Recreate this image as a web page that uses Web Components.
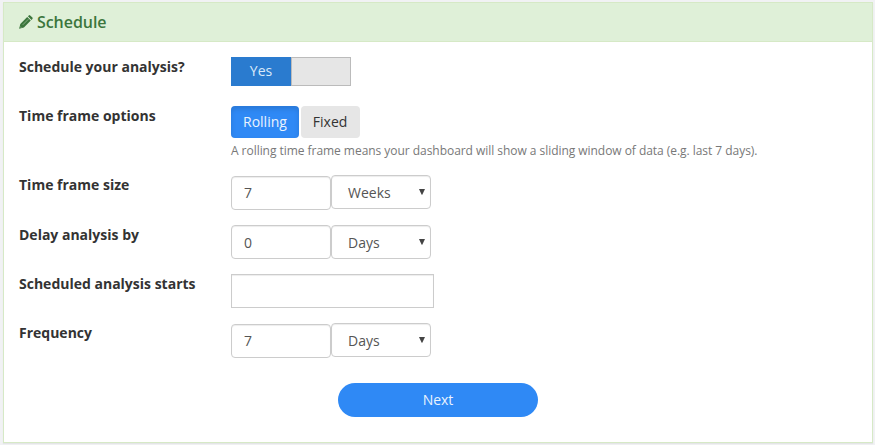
<!DOCTYPE html>
<html lang="en">
<head>
<meta charset="utf-8">
<title>Schedule</title>
<style>
body { margin: 0; background: #f1f2f4; font: 14px/20px "Open Sans", "Noto Sans", sans-serif; color: #333; }
</style>
</head>
<body>
<schedule-panel>
  <span slot="title">Schedule</span>
  <form-row label="Schedule your analysis?" style="--h:49px"><toggle-switch>Yes</toggle-switch></form-row>
  <form-row label="Time frame options" style="--h:69px">
    <choice-button active>Rolling</choice-button><choice-button>Fixed</choice-button>
    <span slot="help">A rolling time frame means your dashboard will show a sliding window of data (e.g. last 7 days).</span>
  </form-row>
  <form-row label="Time frame size" style="--h:50px"><amount-field value="7" unit="Weeks" style="--drop:1px;--line:32px"></amount-field></form-row>
  <form-row label="Delay analysis by" style="--h:49px"><amount-field value="0" unit="Days"></amount-field></form-row>
  <form-row label="Scheduled analysis starts" style="--h:49px"><date-field></date-field></form-row>
  <form-row label="Frequency" style="--h:60px"><amount-field value="7" unit="Days" style="--drop:1px;--line:32px"></amount-field></form-row>
  <pill-button slot="footer">Next</pill-button>
</schedule-panel>
<script>
const define = (name, markup, setup) => customElements.define(name, class extends HTMLElement {
  constructor() {
    super();
    const t = document.createElement('template');
    t.innerHTML = '<style>*{box-sizing:border-box}:host{box-sizing:border-box}</style>' + markup;
    this.attachShadow({ mode: 'open' }).append(t.content.cloneNode(true));
    if (setup) setup(this, this.shadowRoot);
  }
});

define('schedule-panel', `
<style>
:host { display: flex; flex-direction: column; margin: 2px 2px 2px 3px; width: 870px; height: 441px; background: #fff; border: 1px solid #d6e9c6; box-shadow: 0 1px 1px rgba(0,0,0,.05); }
header { display: flex; align-items: center; height: 39px; flex: none; padding-left: 15px; background: #dff0d8; border-bottom: 1px solid #d6e9c6; color: #3c763d; font-size: 16px; font-weight: 600; letter-spacing: -.06px; }
svg { width: 14px; height: 14px; margin: -1px 4px 0 0; }
main { padding: 15px 15px 0; }
footer { display: flex; justify-content: center; }
</style>
<header><svg viewBox="0 0 14 14"><path fill="currentColor" d="M8.9 1.3 9.8.4Q10.5-.2 11.2.4L13.4 2.6Q14 3.3 13.4 4L12.5 4.9ZM8.2 2 11.8 5.6 4.9 12.5.1 13.8 1.3 8.9Z"/><path d="M3.7 9.9 9.4 4.2M1 11.4 2.4 12.8" stroke="#dff0d8" stroke-width=".6" opacity=".75"/></svg><slot name="title"></slot></header>
<main><slot></slot><footer><slot name="footer"></slot></footer></main>`);

define('form-row', `
<style>
:host { display: grid; grid-template-columns: 212px 1fr; height: var(--h); }
label { font-weight: 700; }
.controls { display: flex; gap: 2px; }
.help { font-size: 12px; line-height: 17px; color: #787878; margin-top: 4px; letter-spacing: -.042px; }
</style>
<label></label><div><div class="controls"><slot></slot></div><div class="help"><slot name="help"></slot></div></div>`,
(el, root) => { root.querySelector('label').textContent = el.getAttribute('label'); });

define('toggle-switch', `
<style>
:host { display: flex; width: 120px; height: 29px; }
.on { width: 60px; background: #2a7bcf; color: #d9e9f9; text-align: center; line-height: 27px; }
.off { width: 60px; background: #e6e6e6; border: 1px solid #bbb; }
</style>
<div class="on"><slot></slot></div><div class="off"></div>`);

define('choice-button', `
<style>
:host { display: block; height: 32px; padding: 0 12px; line-height: 32px; border-radius: 4px; background: #e6e6e6; color: #333; }
:host([active]) { background: #2f89f5; color: #eaf3fe; box-shadow: inset 0 3px 5px rgba(0,0,0,.125); }
:host(:not([active])) { padding-right: 12.6px; }
</style>
<slot></slot>`);

define('amount-field', `
<style>
:host { display: flex; }
div { width: 100px; height: 34px; border: 1px solid #ccc; border-radius: 4px; box-shadow: inset 0 1px 1px rgba(0,0,0,.075); background: #fff; color: #555; line-height: 34px; }
.value { padding-left: 12px; margin-top: var(--drop, 0); line-height: var(--line, 34px); }
.unit { display: flex; justify-content: space-between; padding: 0 5px 0 16px; }
svg { width: 6px; height: 6px; margin-top: 13px; }
</style>
<div class="value"></div><div class="unit"><span></span><svg viewBox="0 0 6 6"><path d="M0 0H6L3.3 5.8H2.7Z" fill="#444"/></svg></div>`,
(el, root) => {
  root.querySelector('.value').textContent = el.getAttribute('value');
  root.querySelector('span').textContent = el.getAttribute('unit');
});

define('date-field', `
<style>
:host { display: block; width: 203px; height: 34px; border: 1px solid #ccc; box-shadow: inset 0 1px 1px rgba(0,0,0,.075); }
</style>`);

define('pill-button', `
<style>
:host { display: block; width: 200px; height: 34px; line-height: 34px; border-radius: 17px; background: #2f89f5; color: #eaf3fe; text-align: center; }
</style>
<slot></slot>`);
</script>
</body>
</html>
